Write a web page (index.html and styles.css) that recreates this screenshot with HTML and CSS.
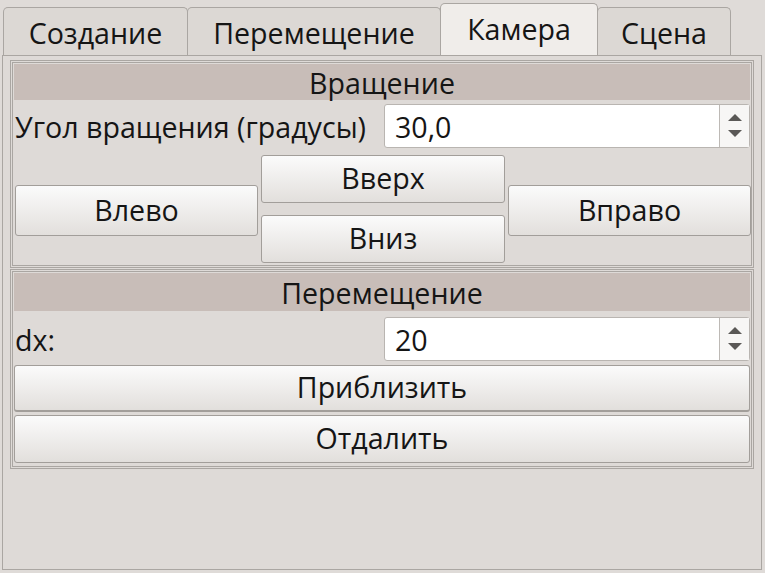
FILE: index.html
```html
<!DOCTYPE html>
<html lang="ru">
<head>
<meta charset="utf-8">
<link rel="stylesheet" href="styles.css">
</head>
<body>
<div class="window">
  <div class="tabs">
    <div class="tab t1">Создание</div>
    <div class="tab t2">Перемещение</div>
    <div class="tab t3 active">Камера</div>
    <div class="tab t4">Сцена</div>
  </div>
  <div class="pane">
    <div class="group g1">
      <div class="header">Вращение</div>
      <div class="row">
        <div class="label">Угол вращения (градусы)</div>
        <div class="spin">
          <div class="value">30,0</div>
          <div class="arrows">
            <svg width="16" height="30" viewBox="0 0 16 30"><polygon points="1,10 15,10 8,3" fill="#5a5856"/><polygon points="1,19 15,19 8,26" fill="#5a5856"/></svg>
          </div>
        </div>
      </div>
      <div class="dirs">
        <div class="btn left">Влево</div>
        <div class="btn up">Вверх</div>
        <div class="btn down">Вниз</div>
        <div class="btn right">Вправо</div>
      </div>
    </div>
    <div class="group g2">
      <div class="header">Перемещение</div>
      <div class="row">
        <div class="label">dx:</div>
        <div class="spin">
          <div class="value">20</div>
          <div class="arrows">
            <svg width="16" height="30" viewBox="0 0 16 30"><polygon points="1,10 15,10 8,3" fill="#5a5856"/><polygon points="1,19 15,19 8,26" fill="#5a5856"/></svg>
          </div>
        </div>
      </div>
      <div class="btn wide zoomin">Приблизить</div>
      <div class="btn wide zoomout">Отдалить</div>
    </div>
  </div>
</div>
</body>
</html>
```

FILE: styles.css
```css
html, body {
  margin: 0;
  padding: 0;
  background: #dfdbd8;
}
body {
  font-family: "Open Sans", "Noto Sans", sans-serif;
  font-size: 28.6px;
  color: #151515;
  width: 765px;
  height: 573px;
  overflow: hidden;
}
.window {
  display: flex;
  flex-direction: column;
}
.tabs {
  display: flex;
  align-items: flex-end;
  height: 55px;
  padding-left: 3px;
  box-sizing: border-box;
}
.tab {
  box-sizing: border-box;
  height: 48px;
  border: 1px solid #aaa6a2;
  border-bottom: none;
  border-radius: 5px 5px 0 0;
  background: #dcd8d4;
  display: flex;
  align-items: center;
  justify-content: center;
  padding-top: 2px;
  margin-right: -1px;
  white-space: nowrap;
}
.t1 { width: 185px; }
.t2 { width: 254px; }
.t3 { width: 158px; }
.t4 { width: 134px; }
.tab.active {
  height: 52px;
  background: #f0edea;
  padding-top: 0;
  padding-bottom: 2px;
  position: relative;
  z-index: 1;
}
.pane {
  box-sizing: border-box;
  margin: 0 3px 0 2px;
  height: 515px;
  border: 1px solid #aaa6a2;
  padding: 4px 7px;
  background: #dedad7;
}
.group {
  border: 3px double #aaa6a2;
  padding: 1px;
  display: flex;
  flex-direction: column;
}
.g1 { height: 200px; }
.g2 { height: 192px; margin-top: 1px; }
.header {
  background: #c8bdb8;
  height: 36px;
  flex: none;
  display: flex;
  align-items: center;
  justify-content: center;
}
.g2 .header { height: 38px; }
.row {
  display: flex;
  align-items: center;
  margin-top: 4px;
  height: 44px;
  flex: none;
}
.g2 .row { margin-top: 6px; }
.label {
  flex: 1;
  padding-left: 1px;
  white-space: nowrap;
}
.spin {
  width: 366px;
  height: 44px;
  box-sizing: border-box;
  background: #ffffff;
  border: 1px solid #b9b5b1;
  border-radius: 3px;
  display: flex;
  align-items: stretch;
}
.value {
  flex: 1;
  display: flex;
  align-items: center;
  padding-left: 10px;
}
.arrows {
  width: 29px;
  border-left: 1px solid #bdb9b5;
  display: flex;
  align-items: center;
  justify-content: center;
  background: #f7f6f5;
}
.dirs {
  display: grid;
  grid-template-columns: 243px 244px 243px;
  column-gap: 3px;
  grid-template-rows: 30px 18px 12px 21px 27px;
  margin-top: 7px;
  padding-left: 1px;
  flex: none;
}
.btn {
  box-sizing: border-box;
  border: 1px solid #a29e9a;
  border-radius: 3px;
  background: linear-gradient(#fbfbfb, #e2dfdc);
  display: flex;
  align-items: center;
  justify-content: center;
  padding-bottom: 3px;
  flex: none;
}
.left { grid-column: 1; grid-row: 2 / 5; }
.right { grid-column: 3; grid-row: 2 / 5; }
.up { grid-column: 2; grid-row: 1 / 3; }
.down { grid-column: 2; grid-row: 4 / 6; }
.wide {
  height: 47px;
}
.zoomin { margin-top: 4px; border-bottom-width: 2px; }
.zoomout { margin-top: 3px; height: 48px; }
```
